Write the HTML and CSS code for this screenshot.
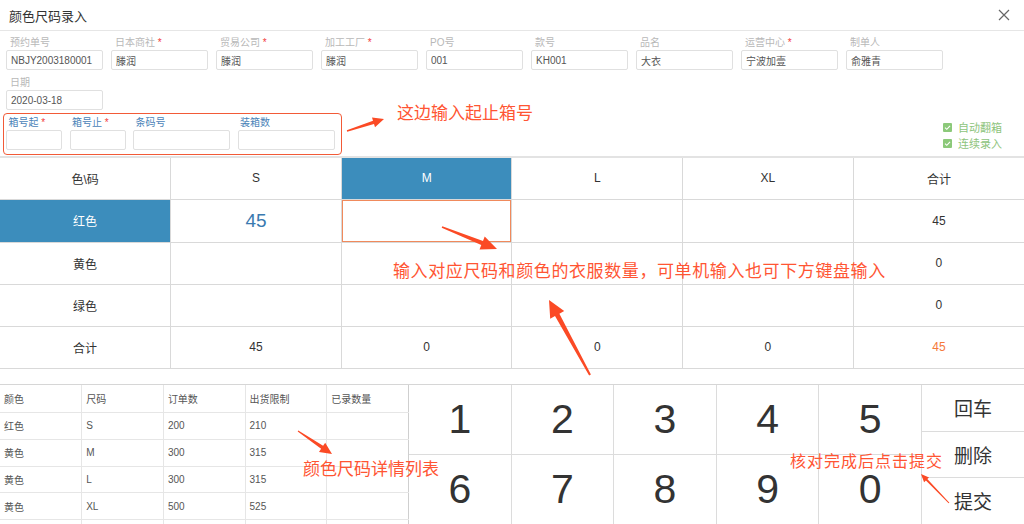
FILE: index.html
```html
<!DOCTYPE html>
<html lang="zh-CN">
<head>
    <meta charset="UTF-8">
    <meta name="viewport" content="width=device-width, initial-scale=1.0">
    <title>颜色尺码录入</title>
    <link rel="stylesheet" href="styles.css">
</head>
<body>
<div class="dialog">
    <div class="dialog-head">
        <span class="title">颜色尺码录入</span>
        <svg class="close" width="12" height="12" viewBox="0 0 12 12"><path d="M1 1L11 11M11 1L1 11" stroke="#666" stroke-width="1.2" fill="none"/></svg>
    </div>

    <div class="fields">
        <div class="field"><label>预约单号</label><input class="input" value="NBJY2003180001"></div>
        <div class="field"><label>日本商社 <span class="req">*</span></label><input class="input" value="滕润"></div>
        <div class="field"><label>贸易公司 <span class="req">*</span></label><input class="input" value="滕润"></div>
        <div class="field"><label>加工工厂 <span class="req">*</span></label><input class="input" value="滕润"></div>
        <div class="field"><label>PO号</label><input class="input" value="001"></div>
        <div class="field"><label>款号</label><input class="input" value="KH001"></div>
        <div class="field"><label>品名</label><input class="input" value="大衣"></div>
        <div class="field"><label>运营中心 <span class="req">*</span></label><input class="input" value="宁波加壹"></div>
        <div class="field"><label>制单人</label><input class="input" value="俞雅青"></div>
        <div class="field"><label>日期</label><input class="input" value="2020-03-18"></div>
    </div>

    <div class="box-row">
        <div class="box-group">
            <div class="field small"><label>箱号起 <span class="req">*</span></label><input class="input"></div>
            <div class="field small"><label>箱号止 <span class="req">*</span></label><input class="input"></div>
            <div class="field"><label>条码号</label><input class="input"></div>
            <div class="field"><label>装箱数</label><input class="input"></div>
        </div>
        <div class="options">
            <div class="option"><span class="check"><svg width="9" height="9" viewBox="0 0 9 9"><path d="M2 4.6L3.8 6.3L7 2.8" stroke="#fff" stroke-width="1.1" fill="none"/></svg></span>自动翻箱</div>
            <div class="option"><span class="check"><svg width="9" height="9" viewBox="0 0 9 9"><path d="M2 4.6L3.8 6.3L7 2.8" stroke="#fff" stroke-width="1.1" fill="none"/></svg></span>连续录入</div>
        </div>
    </div>

    <table class="size-grid">
        <tr class="head-row">
            <td>色\码</td><td>S</td><td class="active">M</td><td>L</td><td>XL</td><td>合计</td>
        </tr>
        <tr class="tall">
            <td class="active">红色</td><td class="big">45</td><td class="editing"></td><td></td><td></td><td>45</td>
        </tr>
        <tr>
            <td>黄色</td><td></td><td></td><td></td><td></td><td>0</td>
        </tr>
        <tr>
            <td>绿色</td><td></td><td></td><td></td><td></td><td>0</td>
        </tr>
        <tr>
            <td>合计</td><td>45</td><td>0</td><td>0</td><td>0</td><td class="sum">45</td>
        </tr>
    </table>

    <div class="bottom">
        <table class="detail">
            <tr class="detail-head"><td>颜色</td><td>尺码</td><td>订单数</td><td>出货限制</td><td>已录数量</td></tr>
            <tr><td>红色</td><td>S</td><td>200</td><td>210</td><td></td></tr>
            <tr><td>黄色</td><td>M</td><td>300</td><td>315</td><td></td></tr>
            <tr><td>黄色</td><td>L</td><td>300</td><td>315</td><td></td></tr>
            <tr><td>黄色</td><td>XL</td><td>500</td><td>525</td><td></td></tr>
            <tr><td></td><td></td><td></td><td></td><td></td></tr>
        </table>
        <div class="keypad">
            <div class="key">1</div><div class="key">2</div><div class="key">3</div><div class="key">4</div><div class="key">5</div>
            <div class="key">6</div><div class="key">7</div><div class="key">8</div><div class="key">9</div><div class="key">0</div>
        </div>
        <div class="actions">
            <div class="action">回车</div>
            <div class="action">删除</div>
            <div class="action">提交</div>
        </div>
    </div>

    <!-- annotations drawn over the screen -->
    <div class="note note-box">这边输入起止箱号</div>
    <div class="note note-grid">输入对应尺码和颜色的衣服数量，可单机输入也可下方键盘输入</div>
    <div class="note note-list">颜色尺码详情列表</div>
    <div class="note note-submit">核对完成后点击提交</div>
    <svg class="arrows" width="1024" height="524" viewBox="0 0 1024 524">
        <polygon points="347.2,131.7 374.0,124.1 375.0,127.2 384,119 372.0,117.6 373.0,120.7 346.8,130.3"/>
        <polygon points="441.7,227.7 481.3,245.1 479.5,249.6 497,249 484.7,236.6 483.0,241.0 442.3,226.3"/>
        <polygon points="590.9,374.5 559.4,313.7 564.2,311.1 549,300 550.2,318.7 555.0,316.1 589.1,375.5"/>
        <polygon points="297.7,431.5 321.1,448.7 319.0,451.9 332,454 325.2,442.7 323.1,445.8 298.3,430.5"/>
        <polygon points="949.4,502.7 927.3,479.1 929.1,477.4 921,474 924.1,482.2 925.9,480.5 948.6,503.3"/>
    </svg>
</div>
</body>
</html>
```

FILE: styles.css
```css
* {
    box-sizing: border-box;
}

body {
    margin: 0;
    font-family: "Liberation Sans", "Noto Sans CJK SC", sans-serif;
    color: #333;
    background: #fff;
}

.dialog {
    position: relative;
    width: 1024px;
    height: 524px;
    overflow: hidden;
}

.dialog-head {
    height: 31px;
    border-bottom: 1px solid #e6e6e6;
    display: flex;
    align-items: center;
    justify-content: space-between;
    padding: 0 14px 0 9px;
}

.title {
    font-size: 13px;
    color: #333;
}

.close {
    display: block;
}

/* form fields */
.fields {
    display: flex;
    flex-wrap: wrap;
    column-gap: 8px;
    row-gap: 5px;
    padding: 4px 6px 0;
}

.field {
    width: 97px;
}

.field.small {
    width: 56px;
}

.field label {
    display: block;
    font-size: 10px;
    line-height: 15px;
    height: 15px;
    color: #b8b8b8;
    padding-left: 4px;
    white-space: nowrap;
}

.req {
    color: #f23c3c;
}

.input {
    display: block;
    width: 100%;
    height: 20px;
    margin: 0;
    border: 1px solid #e0e0e0;
    border-radius: 2px;
    padding: 0 4px;
    font-family: inherit;
    font-size: 10px;
    color: #555;
    background: #fff;
    outline: none;
}

/* box numbers */
.box-row {
    display: flex;
    justify-content: space-between;
    align-items: flex-start;
    margin-top: 3px;
}

.box-group {
    display: flex;
    gap: 7.5px;
    margin-left: 3px;
    width: 339px;
    border: 1.5px solid #f25a37;
    border-radius: 4px;
    padding: 1px 5.5px 3.5px 2px;
}

.box-group .field label {
    color: #4a83b8;
    padding-left: 2.5px;
}

.options {
    margin-top: 6.5px;
    margin-right: 22px;
}

.option {
    display: flex;
    align-items: center;
    gap: 6px;
    font-size: 11px;
    line-height: 16px;
    color: #8ec47c;
}

.check {
    width: 9px;
    height: 9px;
    border-radius: 1px;
    background: #8cc97a;
    display: block;
}

.check svg {
    display: block;
}

/* size grid */
.size-grid {
    width: 100%;
    border-collapse: collapse;
    table-layout: fixed;
    margin-top: 1.5px;
}

.size-grid td {
    border: 1px solid #d9d9d9;
    text-align: center;
    font-size: 12px;
    color: #333;
    padding: 0;
    height: 42px;
}

.size-grid tr.tall td {
    height: 43px;
}

.size-grid tr:first-child td {
    border-top: 2px solid #e3e3e3;
}

.size-grid td:first-child {
    border-left: none;
}

.size-grid td:last-child {
    border-right: none;
}

.size-grid td.active {
    background: #3c8dbc;
    color: #fff;
}

.size-grid td.big {
    font-size: 19px;
    color: #3a7ab0;
}

.size-grid td.editing {
    box-shadow: inset 0 0 0 1px #f08a5c;
}

.size-grid td.sum {
    color: #f5793a;
}

/* bottom section */
.bottom {
    display: flex;
    margin-top: 15px;
    border-top: 1px solid #d6d6d6;
    height: 141px;
}

.detail {
    width: 409px;
    flex: none;
    border-collapse: collapse;
    table-layout: fixed;
    align-self: flex-start;
}

.detail td {
    border: 1px solid #e6e6e6;
    font-size: 10px;
    color: #555;
    text-align: left;
    padding: 0 4px;
    height: 26.75px;
}

.detail tr.detail-head td {
    height: 28px;
    border-top: none;
}

.detail td:first-child {
    border-left: none;
}

.detail td:last-child {
    border-right: 1px solid #cfcfcf;
}

.keypad {
    width: 513px;
    flex: none;
    display: grid;
    grid-template-columns: repeat(5, 1fr);
    grid-auto-rows: 70px;
}

.key {
    border-right: 1px solid #dcdcdc;
    border-bottom: 1px solid #dcdcdc;
    display: flex;
    align-items: center;
    justify-content: center;
    font-size: 41px;
    color: #333;
}

.actions {
    flex: 1;
    display: flex;
    flex-direction: column;
}

.action {
    height: 47px;
    border-bottom: 1px solid #dcdcdc;
    display: flex;
    align-items: center;
    justify-content: center;
    font-size: 19px;
    color: #333;
}

.action:nth-child(2) {
    height: 46px;
}

/* annotations */
.note {
    position: absolute;
    font-size: 17px;
    line-height: 20px;
    color: #ff5533;
    white-space: nowrap;
}

.note-box {
    left: 397px;
    top: 104px;
}

.note-grid {
    left: 393px;
    top: 262px;
    letter-spacing: 0.6px;
}

.note-list {
    left: 303px;
    top: 460px;
}

.note-submit {
    left: 790px;
    top: 452px;
    font-size: 16px;
    letter-spacing: 1px;
}

.arrows {
    position: absolute;
    left: 0;
    top: 0;
    pointer-events: none;
    fill: #fb4a25;
}
```
